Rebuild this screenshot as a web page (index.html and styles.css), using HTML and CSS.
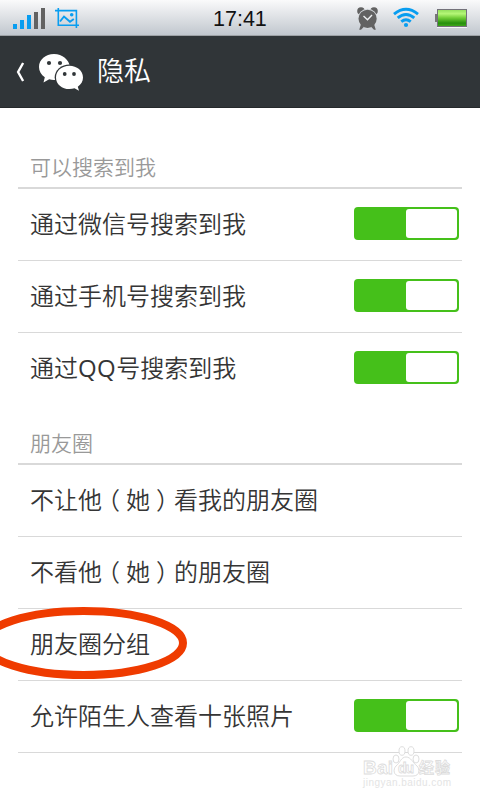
FILE: index.html
```html
<!DOCTYPE html>
<html lang="zh-CN">
<head>
<meta charset="utf-8">
<title>隐私</title>
<link rel="stylesheet" href="styles.css">
</head>
<body>
<div class="status">
  <svg class="status-left" width="100" height="36" viewBox="0 0 100 36">
    <path fill="#089df0" d="M13 24h4v5h-4zM20 20h4v9h-4zM27 15h4v14h-4z"/>
    <path fill="#626262" d="M34 12h4v17h-4zM41 8h4v21h-4z"/>
    <g fill="none" stroke="#089df0">
      <path stroke-width="1.6" d="M58.300 8v17.200H79M55 10.600h21.400V28"/>
      <path stroke-width="1.900" d="M60 21.500l4-5 6 5.200 3.800-2.800"/>
    </g>
    <circle cx="71.700" cy="14.700" r="1.800" fill="#089df0"/>
  </svg>
  <span class="clock">17:41</span>
  <svg class="status-right" width="130" height="36" viewBox="350 0 130 36">
    <g fill="#626262">
      <circle cx="361" cy="11" r="3.800"/><circle cx="374" cy="11" r="3.800"/>
      <circle cx="367.600" cy="18.800" r="10" fill="#d7dbdf"/>
      <circle cx="367.600" cy="18.800" r="9.100"/>
      <path d="M361 24l-1.800 5.800h1.800l3-3zM374 24l1.800 5.800h-1.800l-3-3z"/>
    </g>
    <path fill="none" stroke="#eef0f2" stroke-width="1.400" d="M363.500 16l4 3.700 4.500-4.800"/>
    <g fill="none" stroke="#089df0" stroke-width="2.900">
      <path d="M394 14.200Q406 4.500 418 14.200M397.700 17.900Q406 11 414.300 17.900M401.300 21.600Q406 17.800 410.700 21.600"/>
    </g>
    <circle cx="406" cy="25" r="2.100" fill="#089df0"/>
    <defs><linearGradient id="charge" x2="0" y2="1">
      <stop stop-color="#8fdc5b"/><stop offset=".25" stop-color="#b5f777"/><stop offset=".5" stop-color="#70cc36"/><stop offset=".8" stop-color="#268f0c"/><stop offset="1" stop-color="#42a91d"/>
    </linearGradient></defs>
    <path fill="#777" d="M435 14h3v8h-3z"/>
    <path stroke="#f4f5f6" d="M437 27.500h30"/>
    <rect x="437.500" y="9.500" width="29" height="17" fill="url(#charge)" stroke="#73717a"/>
  </svg>
</div>
<header class="bar">
  <svg width="90" height="72" viewBox="0 36 90 72">
    <path fill="none" stroke="#fff" stroke-width="2.400" d="M23.100 63l-5 9 5 9"/>
    <path fill="#fff" d="M54 54c-8.500 0-15 5.600-15 13 0 4.400 2.200 7.700 5.800 10.200L43.500 82.500l5.700-3.200c2 .5 3.500.7 5.800.6C60 80 70 74 70 67c-1-7.400-7.500-13-16-13z"/>
    <ellipse cx="69.400" cy="77.300" rx="14.700" ry="12.900" fill="#303538"/>
    <path fill="#fff" d="M69.400 65.700c-7.500 0-13.400 5-13.400 11.700s5.900 11.700 13.400 11.700c1.900 0 3.500-.3 5.100-.8l4.500 2.400-1.200-4c3.300-2.400 5.200-5.500 5.200-9.300 0-6.700-6.100-11.700-13.600-11.700z"/>
    <g fill="#303538"><circle cx="49" cy="63" r="2.100"/><circle cx="60" cy="63" r="2.100"/><circle cx="64.700" cy="74" r="1.900"/><circle cx="74" cy="74" r="1.900"/></g>
  </svg>
  <h1>隐私</h1>
</header>
<main>
  <h2>可以搜索到我</h2>
  <ul>
    <li>通过微信号搜索到我<i class="switch"></i></li>
    <li>通过手机号搜索到我<i class="switch"></i></li>
    <li><span>通过<span class="latin">QQ</span>号搜索到我</span><i class="switch"></i></li>
  </ul>
  <h2 class="second">朋友圈</h2>
  <ul class="closed">
    <li><span>不让他<b>（</b>她<b>）</b>看我的朋友圈</span></li>
    <li><span>不看他<b>（</b>她<b>）</b>的朋友圈</span></li>
    <li>朋友圈分组</li>
    <li>允许陌生人查看十张照片<i class="switch"></i></li>
  </ul>
</main>
<svg class="marker" width="190" height="74" viewBox="0 606 190 74">
  <ellipse cx="83.500" cy="643" rx="99.500" ry="32" fill="none" stroke="#ef3b00" stroke-width="8"/>
</svg>
<svg class="watermark" width="100" height="50" viewBox="360 744 100 50">
  <g fill="#fff" stroke="#dedede" stroke-width="1">
    <ellipse cx="402" cy="751" rx="3" ry="4.300"/><ellipse cx="411" cy="751" rx="3" ry="4.300"/>
    <ellipse cx="396" cy="759" rx="3" ry="4"/><ellipse cx="416" cy="759" rx="3" ry="4"/>
    <path d="M406 757c-5 0-6 6-10 9-3 3-3 10 4 10h13c7 0 7-7 4-10-4-3-6-9-11-9z"/>
  </g>
  <g class="mark-text">
    <text x="363" y="774" font-size="19" textLength="30">Bai</text>
    <text x="398" y="773" font-size="14" textLength="16">du</text>
    <text x="419" y="773" font-size="15" textLength="31">经验</text>
    <text class="mark-url" x="363" y="786" font-size="10" textLength="88">jingyan.baidu.com</text>
  </g>
</svg>
</body>
</html>
```
FILE: styles.css
```css
* {
  box-sizing: border-box;
}

body {
  position: relative;
  width: 480px;
  height: 800px;
  margin: 0;
  overflow: hidden;
  background: #fff;
  color: #353535;
  font-family: "Noto Sans CJK SC", sans-serif;
}

svg {
  display: block;
}

.status {
  display: grid;
  grid-template-columns: 100px 1fr 130px;
  height: 36px;
  border-bottom: 1px solid #9da1a5;
  background: linear-gradient(#fafafb, #c1c7ce);
}

.clock {
  padding-left: 113px;
  color: #111;
  font: 21.5px/38px "Liberation Sans", sans-serif;
}

.bar {
  display: flex;
  height: 72px;
  background: #303538;
  border-bottom: 1px solid #25292b;
}

h1 {
  margin: 0 0 0 7px;
  color: #fff;
  font-size: 27px;
  font-weight: 350;
  line-height: 68px;
}

main {
  padding: 0 18px;
}

h2 {
  height: 81px;
  margin: 0;
  padding: 43px 12px 0;
  border-bottom: 2px solid #d9d9d9;
  color: #999;
  font-size: 21px;
  font-weight: 350;
  line-height: 30px;
}

.second {
  height: 60px;
  padding-top: 22px;
}

ul {
  margin: 0;
  padding: 0;
  list-style: none;
}

li {
  display: flex;
  justify-content: space-between;
  height: 72px;
  padding: 0 3px 0 12px;
  border-bottom: 1px solid #d9d9d9;
  font-size: 24px;
  font-weight: 350;
  line-height: 67px;
}

ul:not(.closed) li:last-child {
  border-color: transparent;
}

b {
  margin: 0 6px;
  font-weight: 350;
  font-feature-settings: "halt";
}

.latin {
  font-family: "Open Sans", sans-serif;
  font-weight: 400;
  letter-spacing: .4px;
}

.switch {
  width: 105px;
  height: 33px;
  margin-top: 18px;
  padding: 2px;
  border-radius: 4px;
  background: #45c01a;
}

.switch::before {
  content: "";
  display: block;
  width: 51px;
  height: 29px;
  margin-left: auto;
  border-radius: 3px;
  background: #fff;
}

.marker {
  position: absolute;
  top: 606px;
  left: 0;
}

.watermark {
  position: absolute;
  top: 744px;
  left: 360px;
}

.mark-text {
  fill: #fff;
  stroke: #dcdcdc;
  stroke-width: .8px;
  font-family: "Liberation Sans", "Noto Sans CJK SC", sans-serif;
  font-weight: bold;
}

.mark-url {
  fill: #e4e4e4;
  stroke: none;
  font-weight: normal;
}
```
